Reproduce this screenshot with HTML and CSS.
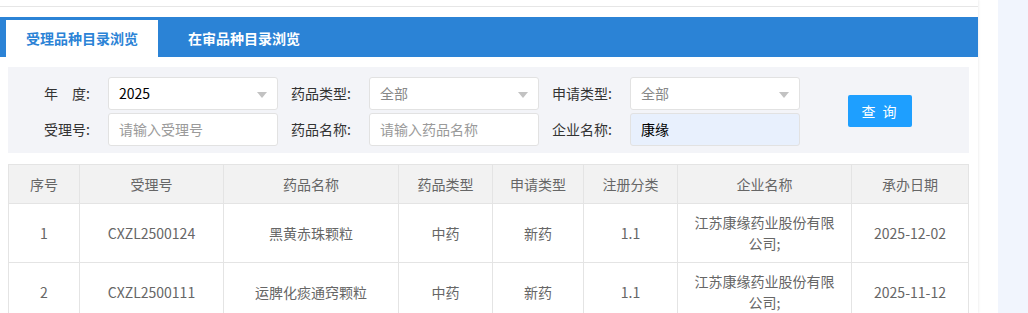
FILE: index.html
```html
<!DOCTYPE html>
<html lang="zh-CN">
<head>
    <meta charset="UTF-8">
    <title>受理品种目录浏览</title>
    <link rel="stylesheet" href="styles.css">
</head>
<body>
    <div class="main">
        <div class="topline"></div>
        <div class="tabs">
            <div class="tab active">受理品种目录浏览</div>
            <div class="tab">在审品种目录浏览</div>
        </div>

        <div class="content">
            <form class="filter">
                <label class="lbl">年&emsp;度:</label>
                <div class="field select"><span class="val">2025</span><i class="arrow"></i></div>
                <label class="lbl">药品类型:</label>
                <div class="field select"><span class="val muted">全部</span><i class="arrow"></i></div>
                <label class="lbl">申请类型:</label>
                <div class="field select"><span class="val muted">全部</span><i class="arrow"></i></div>
                <button type="button" class="btn">查 询</button>

                <label class="lbl">受理号:</label>
                <div class="field"><span class="val ph">请输入受理号</span></div>
                <label class="lbl">药品名称:</label>
                <div class="field"><span class="val ph">请输入药品名称</span></div>
                <label class="lbl">企业名称:</label>
                <div class="field filled"><span class="val">康缘</span></div>
            </form>

            <table class="grid">
                <colgroup>
                    <col style="width:71px">
                    <col style="width:144px">
                    <col style="width:175px">
                    <col style="width:94px">
                    <col style="width:91px">
                    <col style="width:94px">
                    <col style="width:174px">
                    <col style="width:117px">
                </colgroup>
                <thead>
                    <tr>
                        <th>序号</th>
                        <th>受理号</th>
                        <th>药品名称</th>
                        <th>药品类型</th>
                        <th>申请类型</th>
                        <th>注册分类</th>
                        <th>企业名称</th>
                        <th>承办日期</th>
                    </tr>
                </thead>
                <tbody>
                    <tr>
                        <td>1</td>
                        <td>CXZL2500124</td>
                        <td>黑黄赤珠颗粒</td>
                        <td>中药</td>
                        <td>新药</td>
                        <td>1.1</td>
                        <td class="wrap">江苏康缘药业股份有限公司;</td>
                        <td>2025-12-02</td>
                    </tr>
                    <tr>
                        <td>2</td>
                        <td>CXZL2500111</td>
                        <td>运脾化痰通窍颗粒</td>
                        <td>中药</td>
                        <td>新药</td>
                        <td>1.1</td>
                        <td class="wrap">江苏康缘药业股份有限公司;</td>
                        <td>2025-11-12</td>
                    </tr>
                </tbody>
            </table>
        </div>
    </div>
    <div class="side"></div>
</body>
</html>
```

FILE: styles.css
```css
body {
    margin: 0;
    display: flex;
    height: 313px;
    overflow: hidden;
    background: #fff;
    font-family: "Microsoft YaHei", "Noto Sans CJK SC", sans-serif;
    font-size: 14px;
    color: #333;
}
.main {
    width: 978px;
    flex: none;
    box-shadow: 1px 0 2px rgba(0, 0, 0, 0.06);
}
.side {
    flex: 1;
    margin-left: 20px;
    background: #f1f5fd;
}
.topline {
    height: 6px;
    border-bottom: 1px solid #e6e6e6;
    margin-bottom: 10px;
}
.tabs {
    display: flex;
    height: 40px;
    padding: 3px 0 0 6px;
    box-sizing: border-box;
    background: #2b83d6;
}
.tab {
    padding: 0 20px;
    line-height: 37px;
    font-weight: bold;
    color: #fff;
}
.tab + .tab {
    margin-left: 10px;
}
.tab.active {
    background: #fff;
    color: #2b83d6;
}
.content {
    padding: 10px 9px 0 8px;
}
.filter {
    display: grid;
    grid-template-columns: 91px 170px 91px 170px 91px 170px auto;
    row-gap: 3px;
    padding: 10px 0 7px 9px;
    margin: 0;
    background: #f3f4f8;
}
.lbl {
    text-align: right;
    padding-right: 18px;
    line-height: 33px;
    color: #333;
}
.field {
    position: relative;
    height: 33px;
    box-sizing: border-box;
    border: 1px solid #e2e2e2;
    border-radius: 3px;
    background: #fff;
    padding: 0 10px;
    line-height: 31px;
}
.field.filled {
    background: #e8f0fd;
}
.val {
    color: #000;
}
.val.muted {
    color: #888;
}
.val.ph {
    color: #9a9a9a;
}
.arrow {
    position: absolute;
    right: 10px;
    top: 14px;
    width: 0;
    height: 0;
    border-left: 5.5px solid transparent;
    border-right: 5.5px solid transparent;
    border-top: 6px solid #c2c2c2;
}
.btn {
    grid-row: 1 / span 2;
    grid-column: 7;
    align-self: center;
    justify-self: start;
    margin: 0 0 2px 48px;
    width: 64px;
    height: 32px;
    border: none;
    border-radius: 2px;
    background: #1e9fff;
    color: #fff;
    font-family: inherit;
    font-size: 14px;
    letter-spacing: 2px;
    padding: 0;
}
.grid {
    margin-top: 11px;
    width: 960px;
    table-layout: fixed;
    border-collapse: collapse;
    color: #666;
}
.grid th,
.grid td {
    border: 1px solid #e4e4e4;
    text-align: center;
    padding: 0 15px;
}
.grid th {
    height: 38px;
    font-weight: normal;
    background: #f2f2f2;
}
.grid td {
    height: 58px;
    line-height: 21px;
}
```
